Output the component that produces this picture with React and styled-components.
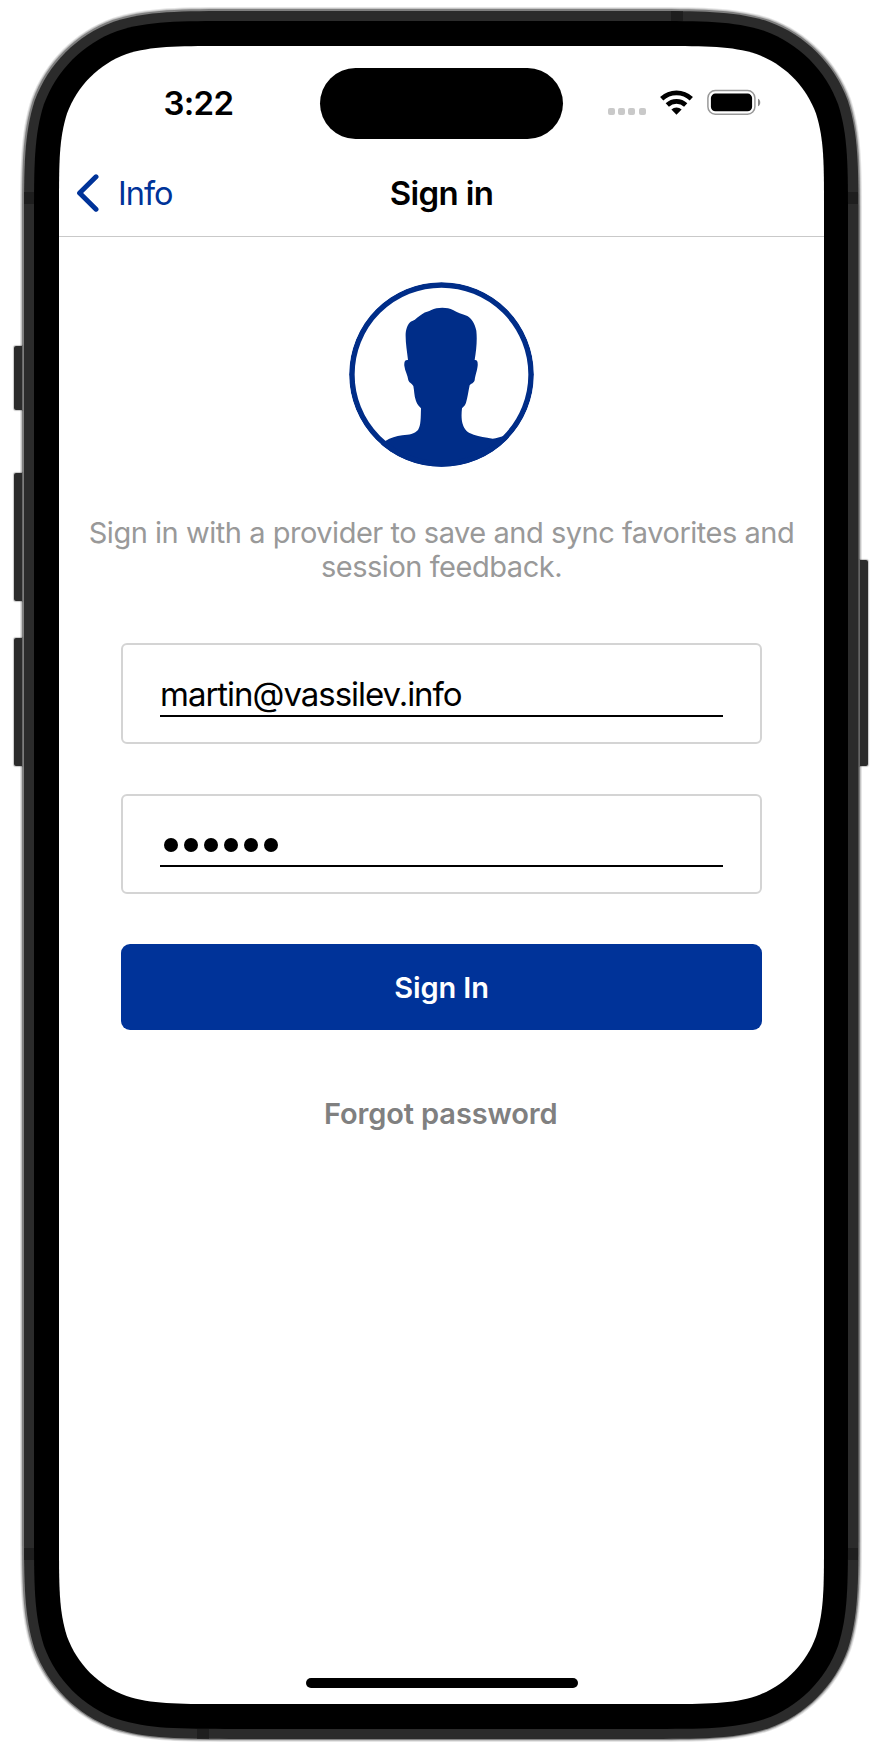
import React from 'react';
import styled, { createGlobalStyle } from 'styled-components';

const BLUE = '#003399';

/* Rounded rectangle with the continuous corners of a phone casing. */
function casing(w, h, r) {
  const a = 1.52866 * r, b = 1.08849 * r, c = 0.86841 * r, d = 0.63149 * r;
  const e = 0.07491 * r, f = 0.37282 * r, g = 0.16906 * r;
  return [
    `M${a} 0H${w - a}`,
    `C${w - b} 0 ${w - c} 0 ${w - d} ${e}`,
    `C${w - f} ${g} ${w - g} ${f} ${w - e} ${d}`,
    `C${w} ${c} ${w} ${b} ${w} ${a}V${h - a}`,
    `C${w} ${h - b} ${w} ${h - c} ${w - e} ${h - d}`,
    `C${w - g} ${h - f} ${w - f} ${h - g} ${w - d} ${h - e}`,
    `C${w - c} ${h} ${w - b} ${h} ${w - a} ${h}H${a}`,
    `C${b} ${h} ${c} ${h} ${d} ${h - e}`,
    `C${f} ${h - g} ${g} ${h - f} ${e} ${h - d}`,
    `C0 ${h - c} 0 ${h - b} 0 ${h - a}V${a}`,
    `C0 ${b} 0 ${c} ${e} ${d}`,
    `C${g} ${f} ${f} ${g} ${d} ${e}`,
    `C${c} 0 ${b} 0 ${a} 0Z`,
  ].join('');
}

const Global = createGlobalStyle`
  *, *::before, *::after { box-sizing: border-box; }
  body { margin: 0; background: #fff; }
  button { border: 0; padding: 0; background: none; font: inherit; color: inherit; }
`;

const Stage = styled.main`
  display: flex;
  align-items: flex-start;
  width: 882px;
  height: 1746px;
  padding: 7px 0 0 14px;
  overflow: hidden;
  font-family: Inter, 'Liberation Sans', sans-serif;
  color: #000;
`;

const Rail = styled.div`
  position: relative;
  z-index: 1;
  flex: none;
  display: flex;
  flex-direction: column;
  width: 8px;
  margin: ${(p) => (p.$side === 'left' ? '0 -2px 0 0' : '0 0 0 -2px')};
  padding-top: ${(p) => p.$top}px;
`;

const SideKey = styled.div`
  height: ${(p) => p.$height}px;
  margin-bottom: ${(p) => p.$after || 0}px;
  background: #2b2b2b;
  border-radius: ${(p) => (p.$side === 'left' ? '2px 0 0 2px' : '0 2px 2px 0')};
  box-shadow: 0 0 1px 1px rgba(0, 0, 0, 0.22);
`;

const Shell = styled.div`
  position: relative;
  flex: none;
  width: ${(p) => p.$w}px;
  height: ${(p) => p.$h}px;
  padding: ${(p) => p.$pad || 0}px;
  background: ${(p) => p.$fill};
  clip-path: path('${(p) => casing(p.$w, p.$h, p.$r)}');
`;

const Band = styled.i`
  position: absolute;
  left: ${(p) => p.$x}px;
  top: ${(p) => p.$y}px;
  width: ${(p) => (p.$upright ? 12 : 10)}px;
  height: ${(p) => (p.$upright ? 10 : 12)}px;
  background: #1e1e1e;
`;

const Display = styled(Shell)`
  display: flex;
  flex-direction: column;
`;

const StatusBar = styled.header`
  display: flex;
  height: 102px;
  padding-left: 104.5px;
`;

const Clock = styled.time`
  width: 156.5px;
  padding-top: 36.5px;
  font-size: 33px;
  line-height: 40px;
  font-weight: 600;
  letter-spacing: -0.7px;
`;

const Island = styled.div`
  width: 243px;
  height: 71.5px;
  margin-top: 21.5px;
  border-radius: 36px;
  background: #000;
`;

const Indicators = styled.div`
  display: flex;
  align-items: flex-end;
  height: 69px;
  padding-left: 44.5px;
`;

const Signal = styled.div`
  display: flex;
  gap: 3.4px;
  margin-right: 14px;
  i { width: 7px; height: 7px; border-radius: 2px; background: #c9c9c9; }
`;

const NavBar = styled.nav`
  display: grid;
  grid-template-columns: 1fr auto 1fr;
  align-items: center;
  height: 89px;
  padding: 1px 16px 0;
  border-bottom: 1px solid #c9c9c9;
`;

const Back = styled.button`
  display: flex;
  align-items: center;
  color: ${BLUE};
  font-size: 32.5px;
  line-height: 40px;
  letter-spacing: -1px;
  svg { margin-right: 19px; }
`;

const BackLabel = styled.span`
  padding-top: 2px;
`;

const NavTitle = styled.h1`
  margin: 0;
  font-size: 33px;
  line-height: 40px;
  font-weight: 600;
  letter-spacing: -0.65px;
`;

const Content = styled.form`
  display: flex;
  flex-direction: column;
  align-items: center;
  flex: 1;
  padding-top: 45px;
`;

const Blurb = styled.p`
  margin: 49px 0 59px;
  font-size: 29px;
  line-height: 34px;
  letter-spacing: -0.47px;
  text-align: center;
  white-space: nowrap;
  color: #999;
`;

const Field = styled.label`
  display: flex;
  flex-direction: column;
  width: 641px;
  height: ${(p) => p.$height}px;
  margin-bottom: 50px;
  padding: 26px 37px 0;
  border: 2px solid #d4d4d4;
  border-radius: 6px;
`;

const Entry = styled.div`
  display: flex;
  align-items: center;
  height: ${(p) => p.$height}px;
  padding-top: ${(p) => p.$drop || 0}px;
  border-bottom: 2px solid #000;
  font-size: 33px;
  letter-spacing: -1.02px;
`;

const Mask = styled.div`
  display: flex;
  gap: 6px;
  padding: 3px 0 0 3.5px;
  i { width: 14px; height: 14px; border-radius: 50%; background: #000; }
`;

const Submit = styled.button`
  width: 641px;
  height: 86px;
  border-radius: 9px;
  background: ${BLUE};
  color: #fff;
  font-size: 29px;
  font-weight: 600;
  letter-spacing: -0.1px;
`;

const Forgot = styled.button`
  margin-top: 66px;
  padding-right: 1.5px;
  color: #808080;
  font-size: 29px;
  line-height: 36px;
  font-weight: 600;
  letter-spacing: -0.12px;
`;

const HomeBar = styled.div`
  align-self: center;
  width: 272px;
  height: 10px;
  margin-bottom: 16px;
  border-radius: 5px;
  background: #000;
`;

const WifiDrawing = styled.svg`
  margin-right: 14px;
`;

const Wifi = () => (
  <WifiDrawing width="33" height="25" viewBox="0 0 33 25">
    <g fill="none" stroke="#000" strokeWidth="4.7">
      <path d="M1.700 8.800a21.500 21.500 0 0 1 29.600 0" />
      <path d="M7.300 15a13.300 13.300 0 0 1 18.400 0" />
    </g>
    <path d="M11.400 19.600a7.400 7.400 0 0 1 10.200 0L16.500 24.700Z" />
  </WifiDrawing>
);

const Battery = () => (
  <svg width="54" height="26" viewBox="0 0 54 26">
    <rect x="0.900" y="1.600" width="47" height="23.600" rx="7.400" fill="none" stroke="#999" strokeWidth="1.500" />
    <rect x="3.900" y="4.600" width="41.200" height="17.700" rx="4.500" />
    <path d="M51 9.700c3 1.200 3 6.400 0 7.600Z" fill="#888" />
  </svg>
);

const Chevron = () => (
  <svg width="24" height="38" viewBox="0 0 24 38" fill="none" stroke={BLUE} strokeWidth="5" strokeLinecap="round" strokeLinejoin="round">
    <path d="M21 2.800L4.600 19L21 35.200" />
  </svg>
);

const Avatar = () => (
  <svg width="185" height="185" viewBox="57 38 555 555">
    <clipPath id="portrait"><circle cx="334.500" cy="315.500" r="277" /></clipPath>
    <g clipPath="url(#portrait)" fill="#002d88">
      <path d="M304 122C322 113 352 113 369 122C382 131 395 133 412 140C424 146 435 164 439 184C442 212 439 242 434 272C441 271 444 276 443 289C441 307 436 315 434 333C431 342 425 342 419 348C415 366 413 384 408 400C404 411 400 412 396 417C394 436 394 450 398 464C403 481 412 490 431 496C449 502 465 504 488 508C501 507 509 503 522 500L620 600H50L166 515C182 505 198 501 217 498C238 496 253 494 264 482C273 468 272 447 273 417C267 411 262 406 258 395C252 379 253 363 250 350C245 342 238 341 235 333C233 316 225 306 223 289C222 277 225 271 234 272C231 244 226 218 227 192C229 174 236 158 247 155C258 151 264 141 277 134C287 127 296 127 304 122Z" />
      <circle cx="334.500" cy="315.500" r="269" fill="none" stroke="#002d88" strokeWidth="17" />
    </g>
  </svg>
);

export default function App() {
  return (
    <>
      <Global />
      <Stage>
        <Rail $side="left" $top={339}>
          <SideKey $side="left" $height={64} $after={63} />
          <SideKey $side="left" $height={128} $after={37} />
          <SideKey $side="left" $height={128} />
        </Rail>
        <Shell $w={842} $h={1735} $r={146} $pad={1} $fill="#e6e6e6">
          <Shell $w={840} $h={1733} $r={145} $pad={1} $fill="#c4c4c4">
            <Shell $w={838} $h={1731} $r={144} $pad={2} $fill="#808080">
              <Shell $w={834.5} $h={1728} $r={142} $pad={10} $fill="#2b2b2b">
                <Band $upright $x={647} $y={0} />
                <Band $upright $x={173} $y={1718} />
                <Band $x={0} $y={181} />
                <Band $x={824} $y={181} />
                <Band $x={0} $y={1537} />
                <Band $x={824} $y={1537} />
                <Shell $w={814} $h={1708} $r={132} $pad={25} $fill="#000">
                  <Display $w={765} $h={1658} $r={107} $fill="#fff">
                    <StatusBar>
                      <Clock>3:22</Clock>
                      <Island />
                      <Indicators>
                        <Signal><i /><i /><i /><i /></Signal>
                        <Wifi />
                        <Battery />
                      </Indicators>
                    </StatusBar>
                    <NavBar>
                      <Back type="button"><Chevron /><BackLabel>Info</BackLabel></Back>
                      <NavTitle>Sign in</NavTitle>
                    </NavBar>
                    <Content>
                      <Avatar />
                      <Blurb>
                        Sign in with a provider to save and sync favorites and
                        <br />
                        session feedback.
                      </Blurb>
                      <Field $height={101}>
                        <Entry $height={46} $drop={1}>martin@vassilev.info</Entry>
                      </Field>
                      <Field $height={100}>
                        <Entry $height={45}>
                          <Mask><i /><i /><i /><i /><i /><i /></Mask>
                        </Entry>
                      </Field>
                      <Submit type="button">Sign In</Submit>
                      <Forgot type="button">Forgot password</Forgot>
                    </Content>
                    <HomeBar />
                  </Display>
                </Shell>
              </Shell>
            </Shell>
          </Shell>
        </Shell>
        <Rail $side="right" $top={552.5}>
          <SideKey $side="right" $height={206.5} />
        </Rail>
      </Stage>
    </>
  );
}
